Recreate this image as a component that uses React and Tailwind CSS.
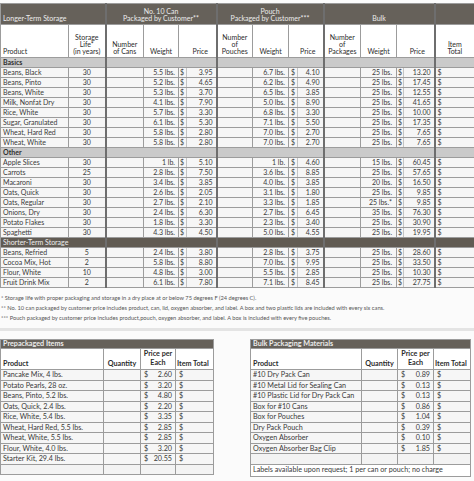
const basics = [
  ["Beans, Black", "30", "5.5 lbs.", "3.95", "6.7 lbs.", "4.10", "25 lbs.", "13.20"],
  ["Beans, Pinto", "30", "5.2 lbs.", "4.65", "6.2 lbs.", "4.90", "25 lbs.", "17.45"],
  ["Beans, White", "30", "5.3 lbs.", "3.70", "6.5 lbs.", "3.85", "25 lbs.", "12.55"],
  ["Milk, Nonfat Dry", "30", "4.1 lbs.", "7.90", "5.0 lbs.", "8.90", "25 lbs.", "41.65"],
  ["Rice, White", "30", "5.7 lbs.", "3.30", "6.8 lbs.", "3.30", "25 lbs.", "10.00"],
  ["Sugar, Granulated", "30", "6.1 lbs.", "5.30", "7.1 lbs.", "5.50", "25 lbs.", "17.35"],
  ["Wheat, Hard Red", "30", "5.8 lbs.", "2.80", "7.0 lbs.", "2.70", "25 lbs.", "7.65"],
  ["Wheat, White", "30", "5.8 lbs.", "2.80", "7.0 lbs.", "2.70", "25 lbs.", "7.65"],
];

const other = [
  ["Apple Slices", "30", "1 lb.", "5.10", "1 lb.", "4.60", "15 lbs.", "60.45"],
  ["Carrots", "25", "2.8 lbs.", "7.50", "3.6 lbs.", "8.85", "25 lbs.", "57.65"],
  ["Macaroni", "30", "3.4 lbs.", "3.85", "4.0 lbs.", "3.85", "20 lbs.", "16.50"],
  ["Oats, Quick", "30", "2.6 lbs.", "2.05", "3.1 lbs.", "1.80", "25 lbs.", "9.85"],
  ["Oats, Regular", "30", "2.7 lbs.", "2.10", "3.3 lbs.", "1.85", "25 lbs.*", "9.85"],
  ["Onions, Dry", "30", "2.4 lbs.", "6.30", "2.7 lbs.", "6.45", "35 lbs.", "76.30"],
  ["Potato Flakes", "30", "1.8 lbs.", "3.30", "2.3 lbs.", "3.40", "25 lbs.", "30.90"],
  ["Spaghetti", "30", "4.3 lbs.", "4.50", "5.0 lbs.", "4.55", "25 lbs.", "19.95"],
];

const shorter = [
  ["Beans, Refried", "5", "2.4 lbs.", "3.80", "2.8 lbs.", "3.75", "25 lbs.", "28.60"],
  ["Cocoa Mix, Hot", "2", "5.8 lbs.", "8.80", "7.0 lbs.", "9.95", "25 lbs.", "33.50"],
  ["Flour, White", "10", "4.8 lbs.", "3.00", "5.5 lbs.", "2.85", "25 lbs.", "10.30"],
  ["Fruit Drink Mix", "2", "6.1 lbs.", "7.80", "7.1 lbs.", "8.45", "25 lbs.", "27.75"],
];

const prepackaged = [
  ["Pancake Mix, 4 lbs.", "2.60"],
  ["Potato Pearls, 28 oz.", "3.20"],
  ["Beans, Pinto, 5.2 lbs.", "4.80"],
  ["Oats, Quick, 2.4 lbs.", "2.20"],
  ["Rice, White, 5.4 lbs.", "3.35"],
  ["Wheat, Hard Red, 5.5 lbs.", "2.85"],
  ["Wheat, White, 5.5 lbs.", "2.85"],
  ["Flour, White, 4.0 lbs.", "3.20"],
  ["Starter Kit, 29.4 lbs.", "20.55"],
];

const materials = [
  ["#10 Dry Pack Can", "0.89"],
  ["#10 Metal Lid for Sealing Can", "0.13"],
  ["#10 Plastic Lid for Dry Pack Can", "0.13"],
  ["Box for #10 Cans", "0.86"],
  ["Box for Pouches", "1.04"],
  ["Dry Pack Pouch", "0.39"],
  ["Oxygen Absorber", "0.10"],
  ["Oxygen Absorber Bag Clip", "1.85"],
];

// shared cell styles
const c = "border border-[#9c9c9c] p-0 leading-none whitespace-nowrap overflow-hidden";
const g = "border-l-2 border-l-[#6e6e6e]";
const dollar = "border-r-[#c4c4c4] pl-[1px] text-left";
const band = "bg-[#66615a] text-[#ececec] align-bottom pb-[2px]";

function ItemRow({ r }) {
  const [name, life, w1, p1, w2, p2, w3, p3] = r;
  return (
    <tr className="h-[10px] bg-[#f6f6f6]">
      <td className={`${c} pl-[2px] text-left`}>{name}</td>
      <td className={`${c} text-center`}>{life}</td>
      <td className={`${c} ${g}`}></td>
      <td className={`${c} text-right pr-[3px]`}>{w1}</td>
      <td className={`${c} ${dollar}`}>$</td>
      <td className={`${c} border-l-[#c4c4c4] text-right pr-[3px]`}>{p1}</td>
      <td className={`${c} ${g}`}></td>
      <td className={`${c} text-right pr-[3px]`}>{w2}</td>
      <td className={`${c} ${dollar} pl-[2px]`}>$</td>
      <td className={`${c} border-l-[#c4c4c4] text-right pr-[3px]`}>{p2}</td>
      <td className={`${c} ${g}`}></td>
      <td className={`${c} text-right pr-[4px]`}>{w3}</td>
      <td className={`${c} ${dollar}`}>$</td>
      <td className={`${c} border-l-[#c4c4c4] text-right pr-[3px]`}>{p3}</td>
      <td className={`${c} ${g} pl-[2px] text-left`}>$</td>
    </tr>
  );
}

function SectionRow({ label, dark }) {
  const bg = dark ? "bg-[#615b53] text-[#eeeeee]" : "bg-[#cacaca] text-[#2f2f2f] font-bold";
  return (
    <tr className={`h-[10px] ${bg}`}>
      <td colSpan={2} className={`${c} pl-[2px] text-left`}>{label}</td>
      <td colSpan={4} className={`${c} ${g}`}></td>
      <td colSpan={4} className={`${c} ${g}`}></td>
      <td colSpan={4} className={`${c} ${g}`}></td>
      <td className={`${c} ${g}`}></td>
    </tr>
  );
}

function MainTable() {
  const widths = [68, 37, 38, 35, 8, 30, 36, 36, 9, 26, 37, 36, 7, 31, 40];
  return (
    <table className="table-fixed border-collapse w-[474px] text-[7px] text-[#3a3a3a]">
      <colgroup>
        {widths.map((w, i) => (
          <col key={i} style={{ width: w }} />
        ))}
      </colgroup>
      <thead>
        <tr className="h-[21px]">
          <td colSpan={2} className={`${c} ${band} pl-[2px] text-left`}>Longer-Term Storage</td>
          <td colSpan={4} className={`${c} ${band} ${g} text-center leading-[10px]`}>
            No. 10 Can
            <br />
            Packaged by Customer**
          </td>
          <td colSpan={4} className={`${c} ${band} ${g} text-center leading-[10px]`}>
            Pouch
            <br />
            Packaged by Customer***
          </td>
          <td colSpan={4} className={`${c} ${band} ${g} text-center`}>Bulk</td>
          <td className={`${c} ${band} ${g}`}></td>
        </tr>
        <tr className="h-[33px] bg-white text-[#2c2c2c]">
          <td className={`${c} align-bottom pl-[2px] pb-[2px] text-left`}>Product</td>
          <td className={`${c} align-bottom pb-[2px] text-center leading-[9px]`}>
            Storage
            <br />
            Life*
            <br />
            (in years)
          </td>
          <td className={`${c} ${g} align-bottom pb-[2px] text-center leading-[9px]`}>
            Number
            <br />
            of Cans
          </td>
          <td className={`${c} align-bottom pb-[2px] text-center`}>Weight</td>
          <td colSpan={2} className={`${c} align-bottom pb-[2px] pl-[6px] text-center`}>Price</td>
          <td className={`${c} ${g} align-bottom pb-[2px] text-center leading-[9px]`}>
            Number
            <br />
            of
            <br />
            Pouches
          </td>
          <td className={`${c} align-bottom pb-[2px] text-center`}>Weight</td>
          <td colSpan={2} className={`${c} align-bottom pb-[2px] pl-[4px] text-center`}>Price</td>
          <td className={`${c} ${g} align-bottom pb-[2px] text-center leading-[9px]`}>
            Number
            <br />
            of
            <br />
            Packages
          </td>
          <td className={`${c} align-bottom pb-[2px] text-center`}>Weight</td>
          <td colSpan={2} className={`${c} align-bottom pb-[2px] pl-[4px] text-center`}>Price</td>
          <td className={`${c} ${g} align-bottom pb-[2px] text-center leading-[9px]`}>
            Item
            <br />
            Total
          </td>
        </tr>
      </thead>
      <tbody>
        <SectionRow label="Basics" />
        {basics.map((r) => (
          <ItemRow key={r[0]} r={r} />
        ))}
        <SectionRow label="Other" />
        {other.map((r) => (
          <ItemRow key={r[0]} r={r} />
        ))}
        <SectionRow label="Shorter-Term Storage" dark />
        {shorter.map((r) => (
          <ItemRow key={r[0]} r={r} />
        ))}
      </tbody>
    </table>
  );
}

function PriceTable({ title, rows, widths, blank, footer }) {
  return (
    <table className="table-fixed border-collapse text-[7.2px] text-[#3a3a3a]" style={{ width: widths.reduce((a, b) => a + b, 0) }}>
      <colgroup>
        {widths.map((w, i) => (
          <col key={i} style={{ width: w }} />
        ))}
      </colgroup>
      <thead>
        <tr className="h-[9px]">
          <td colSpan={4} className={`${c} bg-[#66615a] text-[#ececec] font-bold pl-[2px] text-left align-middle`}>
            {title}
          </td>
        </tr>
        <tr className="h-[21px] bg-white text-[#2c2c2c] font-bold">
          <td className={`${c} align-bottom pl-[2px] pb-[2px] text-left`}>Product</td>
          <td className={`${c} align-bottom pb-[2px] text-center`}>Quantity</td>
          <td className={`${c} align-bottom pb-[2px] text-center`}>
            <div className="h-[9px] leading-[9px]">Price per</div>
            <div className="h-[9px] leading-[9px]">Each</div>
          </td>
          <td className={`${c} align-bottom pb-[2px] pl-[1px] text-left`}>Item Total</td>
        </tr>
      </thead>
      <tbody>
        {rows.map(([name, price]) => (
          <tr key={name} className="h-[10.5px] bg-[#f6f6f6]">
            <td className={`${c} pl-[2px] text-left`}>{name}</td>
            <td className={c}></td>
            <td className={`${c} px-[3px]`}>
              <div className="flex justify-between">
                <span>$</span>
                <span>{price}</span>
              </div>
            </td>
            <td className={`${c} pl-[3px] text-left`}>$</td>
          </tr>
        ))}
        {Array.from({ length: blank }).map((_, i) => (
          <tr key={i} className="h-[10.5px] bg-[#f3f3f3]">
            <td className={c}></td>
            <td className={c}></td>
            <td className={c}></td>
            <td className={c}></td>
          </tr>
        ))}
        {footer && (
          <tr className="h-[12px] bg-white">
            <td colSpan={4} className={`${c} pl-[2px] text-left`}>
              {footer}
            </td>
          </tr>
        )}
      </tbody>
    </table>
  );
}

export default function App() {
  return (
    <div className="w-[474px] h-[481px] overflow-hidden bg-[#fbfbfb] pt-[3px] font-['Lato','Liberation_Sans',sans-serif]">
      <MainTable />

      {/* footnotes */}
      <div className="mt-[5px] pl-[1px] text-[5.7px] leading-[10px] text-[#555555] whitespace-nowrap">
        <div>* Storage life with proper packaging and storage in a dry place at or below 75 degrees F (24 degrees C).</div>
        <div>
          ** No. 10 can packaged by customer price includes product, can, lid, oxygen absorber, and label. A box and two
          plastic lids are included with every six cans.
        </div>
        <div>
          *** Pouch packaged by customer price includes product,pouch, oxygen absorber, and label. A box is included
          with every five pouches.
        </div>
      </div>

      <div className="mt-[5px] h-[3px] bg-[#e4e4e4]" />

      <div className="mt-[8px] flex items-start">
        <PriceTable title="Prepackaged Items" rows={prepackaged} widths={[103, 37, 35, 38]} blank={1} />
        <div className="ml-[36px]">
          <PriceTable
            title="Bulk Packaging Materials"
            rows={materials}
            widths={[111, 36, 36, 37]}
            blank={1}
            footer="Labels available upon request; 1 per can or pouch; no charge"
          />
        </div>
      </div>
    </div>
  );
}
